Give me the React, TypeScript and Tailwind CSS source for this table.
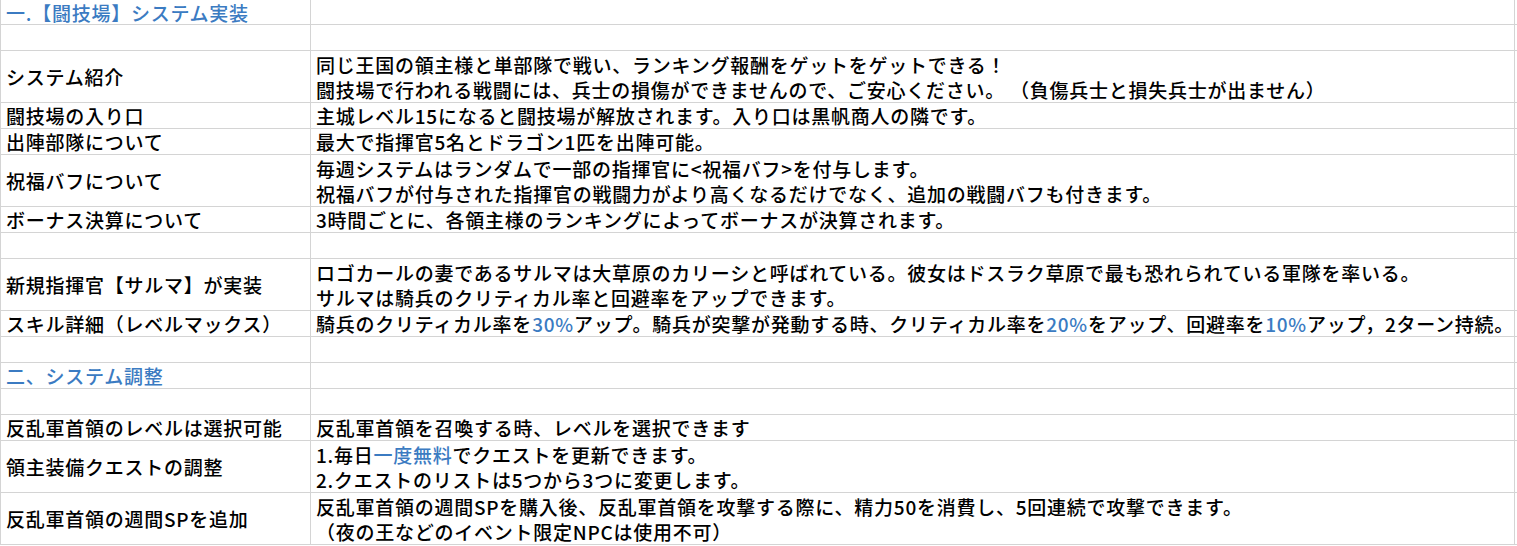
import React from 'react'

type Row = {
  label?: string
  heading?: boolean
  lines?: React.ReactNode[]
  tall?: boolean
}

const Blue = ({ children }: { children: React.ReactNode }) => (
  <span className="text-[#3b7bc2]">{children}</span>
)

const rows: Row[] = [
  { label: '一.【闘技場】システム実装', heading: true },
  {},
  {
    label: 'システム紹介',
    tall: true,
    lines: [
      '同じ王国の領主様と単部隊で戦い、ランキング報酬をゲットをゲットできる！',
      '闘技場で行われる戦闘には、兵士の損傷ができませんので、ご安心ください。 （負傷兵士と損失兵士が出ません）',
    ],
  },
  { label: '闘技場の入り口', lines: ['主城レベル15になると闘技場が解放されます。入り口は黒帆商人の隣です。'] },
  { label: '出陣部隊について', lines: ['最大で指揮官5名とドラゴン1匹を出陣可能。'] },
  {
    label: '祝福バフについて',
    tall: true,
    lines: [
      '毎週システムはランダムで一部の指揮官に<祝福バフ>を付与します。',
      '祝福バフが付与された指揮官の戦闘力がより高くなるだけでなく、追加の戦闘バフも付きます。',
    ],
  },
  { label: 'ボーナス決算について', lines: ['3時間ごとに、各領主様のランキングによってボーナスが決算されます。'] },
  {},
  {
    label: '新規指揮官【サルマ】が実装',
    tall: true,
    lines: [
      'ロゴカールの妻であるサルマは大草原のカリーシと呼ばれている。彼女はドスラク草原で最も恐れられている軍隊を率いる。',
      'サルマは騎兵のクリティカル率と回避率をアップできます。',
    ],
  },
  {
    label: 'スキル詳細（レベルマックス）',
    lines: [
      <>
        騎兵のクリティカル率を<Blue>30%</Blue>アップ。騎兵が突撃が発動する時、クリティカル率を<Blue>20%</Blue>をアップ、回避率を
        <Blue>10%</Blue>アップ，2ターン持続。
      </>,
    ],
  },
  {},
  { label: '二、システム調整', heading: true },
  {},
  { label: '反乱軍首領のレベルは選択可能', lines: ['反乱軍首領を召喚する時、レベルを選択できます'] },
  {
    label: '領主装備クエストの調整',
    tall: true,
    lines: [
      <>
        1.毎日<Blue>一度無料</Blue>でクエストを更新できます。
      </>,
      '2.クエストのリストは5つから3つに変更します。',
    ],
  },
  {
    label: '反乱軍首領の週間SPを追加',
    tall: true,
    lines: [
      '反乱軍首領の週間SPを購入後、反乱軍首領を攻撃する際に、精力50を消費し、5回連続で攻撃できます。',
      '（夜の王などのイベント限定NPCは使用不可）',
    ],
  },
]

export default function App() {
  return (
    <div
      className="w-[1517px] h-[546px] overflow-hidden bg-white text-black text-[19px] font-medium leading-[25px] tracking-[0.75px]"
      style={{ fontFamily: '"Noto Sans CJK JP", "Noto Sans", sans-serif' }}
    >
      {rows.map((row, i) => (
        <div
          key={i}
          className={`flex border-b border-[#d4d4d4] ${i === 0 ? 'h-[25px]' : row.tall ? 'h-[52px]' : 'h-[26px]'}`}
        >
          <div
            className={`w-[311px] shrink-0 border-l border-r border-[#d4d4d4] pl-[5px] flex items-center whitespace-pre ${
              row.heading ? 'text-[#3b7bc2]' : ''
            }`}
          >
            {row.label}
          </div>
          <div className="w-[1204px] shrink-0 border-r border-[#d4d4d4] pl-[5px] flex flex-col justify-center whitespace-pre">
            {row.lines?.map((line, j) => (
              <div key={j}>{line}</div>
            ))}
          </div>
        </div>
      ))}
    </div>
  )
}
